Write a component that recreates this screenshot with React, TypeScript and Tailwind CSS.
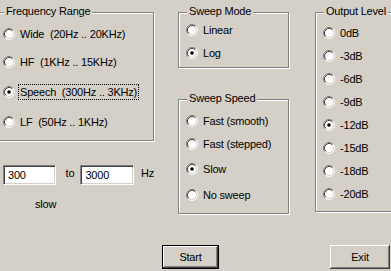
import React from 'react';

const Radio = ({ checked }: { checked?: boolean }) => (
  <svg width="12" height="12" viewBox="0 0 12 12" className="shrink-0">
    <circle cx="6" cy="6" r="5" fill="#fff" />
    <path d="M2.11 9.89 A5.5 5.5 0 0 1 9.89 2.11" fill="none" stroke="#808080" strokeWidth="1" />
    <path d="M9.89 2.11 A5.5 5.5 0 0 1 2.11 9.89" fill="none" stroke="#fff" strokeWidth="1" />
    <path d="M2.82 9.18 A4.5 4.5 0 0 1 9.18 2.82" fill="none" stroke="#404040" strokeWidth="1" />
    <path d="M9.18 2.82 A4.5 4.5 0 0 1 2.82 9.18" fill="none" stroke="#d4d0c8" strokeWidth="1" />
    {checked && <circle cx="6" cy="6" r="1.8" fill="#000" />}
  </svg>
);

interface OptionProps {
  label: string;
  checked?: boolean;
  focused?: boolean;
  className?: string;
}

const Option = ({ label, checked, focused, className = '' }: OptionProps) => (
  <div className={`flex items-center h-[16px] pl-[7px] gap-[5px] whitespace-pre ${className}`}>
    <Radio checked={checked} />
    <span
      className={
        focused
          ? 'px-[1px] -ml-[2px] leading-[14px] border border-dotted border-black'
          : 'leading-[14px]'
      }
    >
      {label}
    </span>
  </div>
);

interface GroupProps {
  title: string;
  className?: string;
  children: React.ReactNode;
}

const GroupBox = ({ title, className = '', children }: GroupProps) => (
  <div
    className={`
      relative flex flex-col
      border border-[#808080]
      shadow-[inset_1px_1px_0_#fff,1px_1px_0_#fff]
      ${className}
    `}
  >
    <span className="absolute left-[8px] top-[-8px] px-[2px] bg-[#d4d0c8] leading-[13px] whitespace-pre">
      {title}
    </span>
    {children}
  </div>
);

const TextBox = ({ value, className = '' }: { value: string; className?: string }) => (
  <div
    className={`
      h-[20px] flex items-center pl-[4px] bg-white
      border border-t-[#808080] border-l-[#808080] border-b-white border-r-white
      shadow-[inset_1px_1px_0_#404040,inset_-1px_-1px_0_#d4d0c8]
      ${className}
    `}
  >
    {value}
  </div>
);

export default function App() {
  return (
    <div
      className="
        w-[391px] h-[271px] overflow-hidden
        flex flex-col
        bg-[#d4d0c8] text-black text-[11px] tracking-[-0.2px]
        font-['Liberation_Sans',Arial,sans-serif]
      "
    >
      <div className="h-[245px] pt-[12px] flex">
        {/* left column */}
        <div className="ml-[-5px] w-[159px] shrink-0 flex flex-col">
          <GroupBox title="Frequency Range" className="h-[129px] pt-[13px]">
            <Option label="Wide  (20Hz .. 20KHz)" />
            <Option label="HF  (1KHz .. 15KHz)" className="mt-[12px]" />
            <Option label="Speech  (300Hz .. 3KHz)" checked focused className="mt-[14px]" />
            <Option label="LF  (50Hz .. 1KHz)" className="mt-[14px]" />
          </GroupBox>
          <div className="mt-[24px] pl-[8px] flex items-center">
            <TextBox value="300" className="w-[54px]" />
            <span className="ml-[10px] mb-[4px]">to</span>
            <TextBox value="3000" className="ml-[6px] w-[55px]" />
            <span className="ml-[7px] mb-[4px]">Hz</span>
          </div>
          <div className="mt-[12px] pl-[40px] leading-[13px]">slow</div>
        </div>

        {/* middle column */}
        <div className="ml-[24px] w-[111px] shrink-0 flex flex-col">
          <GroupBox title="Sweep Mode" className="h-[56px] pt-[9px]">
            <Option label="Linear" />
            <Option label="Log" checked className="mt-[7px]" />
          </GroupBox>
          <GroupBox title="Sweep Speed" className="mt-[31px] h-[115px] pt-[13px]">
            <Option label="Fast (smooth)" />
            <Option label="Fast (stepped)" className="mt-[7px]" />
            <Option label="Slow" checked className="mt-[9px]" />
            <Option label="No sweep" className="mt-[10px]" />
          </GroupBox>
        </div>

        {/* right column */}
        <div className="ml-[26px] w-[90px] shrink-0 flex flex-col">
          <GroupBox title="Output Level" className="h-[200px] pt-[12px] gap-[7px]">
            <Option label="0dB" />
            <Option label="-3dB" />
            <Option label="-6dB" />
            <Option label="-9dB" />
            <Option label="-12dB" checked />
            <Option label="-15dB" />
            <Option label="-18dB" />
            <Option label="-20dB" />
          </GroupBox>
        </div>
      </div>

      <div className="flex h-[24px]">
        <button
          className="
            ml-[162px] w-[57px] h-[24px]
            border border-black
            shadow-[inset_-1px_-1px_0_#404040,inset_1px_1px_0_#fff,inset_-2px_-2px_0_#808080]
            bg-[#d4d0c8]
          "
        >
          Start
        </button>
        <button
          className="
            ml-[111px] w-[60px] h-[24px]
            shadow-[inset_-1px_-1px_0_#404040,inset_1px_1px_0_#fff,inset_-2px_-2px_0_#808080]
            bg-[#d4d0c8]
          "
        >
          Exit
        </button>
      </div>
    </div>
  );
}
